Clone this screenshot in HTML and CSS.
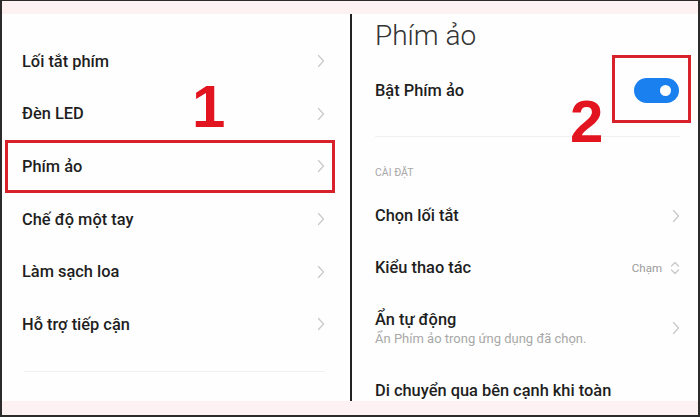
FILE: index.html
```html
<!DOCTYPE html>
<html lang="vi">
<head>
<meta charset="utf-8">
<link rel="stylesheet" href="styles.css">
</head>
<body>
<div class="frame">
  <div class="strip top"></div>
  <div class="main">
    <section class="col left">
      <div class="list">
        <div class="item"><span>Lối tắt phím</span><svg class="chev" viewBox="0 0 8 14"><path d="M1.5 1.5 L6.5 7 L1.5 12.5"/></svg></div>
        <div class="item"><span>Đèn LED</span><svg class="chev" viewBox="0 0 8 14"><path d="M1.5 1.5 L6.5 7 L1.5 12.5"/></svg></div>
        <div class="item"><span>Phím ảo</span><svg class="chev" viewBox="0 0 8 14"><path d="M1.5 1.5 L6.5 7 L1.5 12.5"/></svg></div>
        <div class="item"><span>Chế độ một tay</span><svg class="chev" viewBox="0 0 8 14"><path d="M1.5 1.5 L6.5 7 L1.5 12.5"/></svg></div>
        <div class="item"><span>Làm sạch loa</span><svg class="chev" viewBox="0 0 8 14"><path d="M1.5 1.5 L6.5 7 L1.5 12.5"/></svg></div>
        <div class="item"><span>Hỗ trợ tiếp cận</span><svg class="chev" viewBox="0 0 8 14"><path d="M1.5 1.5 L6.5 7 L1.5 12.5"/></svg></div>
      </div>
      <div class="sep-left"></div>
      <div class="mark box1"></div>
      <div class="num num1">1</div>
    </section>
    <div class="divider"></div>
    <section class="col right">
      <h1 class="title">Phím ảo</h1>
      <div class="row toggle-row">
        <span>Bật Phím ảo</span>
        <div class="toggle"><div class="knob"></div></div>
      </div>
      <div class="sep-right"></div>
      <div class="section-label">CÀI ĐẶT</div>
      <div class="row r1"><span>Chọn lối tắt</span><svg class="chev" viewBox="0 0 8 14"><path d="M1.5 1.5 L6.5 7 L1.5 12.5"/></svg></div>
      <div class="row r2"><span>Kiểu thao tác</span>
        <div class="value"><span class="val">Chạm</span><svg class="updown" viewBox="0 0 10 16"><path d="M1.5 6 L5 2.5 L8.5 6 M1.5 10 L5 13.5 L8.5 10"/></svg></div>
      </div>
      <div class="row r3">
        <div class="two"><span>Ẩn tự động</span><span class="sub">Ẩn Phím ảo trong ứng dụng đã chọn.</span></div>
        <svg class="chev" viewBox="0 0 8 14"><path d="M1.5 1.5 L6.5 7 L1.5 12.5"/></svg>
      </div>
      <div class="row r4"><span>Di chuyển qua bên cạnh khi toàn</span></div>
      <div class="mark box2"></div>
      <div class="num num2">2</div>
    </section>
  </div>
  <div class="strip bottom"></div>
</div>
</body>
</html>
```

FILE: styles.css
```css
* { box-sizing: border-box; }
html, body { margin: 0; padding: 0; background: #fff; }
body { font-family: Roboto, "Noto Sans", sans-serif; color: #1f1f1f; }

.frame {
  width: 700px;
  height: 417px;
  border-style: solid;
  border-color: #2b2b2b;
  border-width: 1px 2px 2px 2px;
  display: flex;
  flex-direction: column;
  overflow: hidden;
  background: #fefefe;
}
.strip { background: #fdf1f1; flex: none; }
.strip.top { height: 13px; }
.strip.bottom { height: 14px; }

.main {
  flex: 1;
  display: flex;
  min-height: 0;
  overflow: hidden;
}
.col { position: relative; }
.left { width: 348px; flex: none; padding: 21px 25px 0 18px; }
.divider { width: 2px; background: #222; flex: none; }
.right { flex: 1; padding: 0 18px 0 23px; display: flex; flex-direction: column; overflow: hidden; }
.right > * { flex: none; }

.list { display: flex; flex-direction: column; }
.item {
  height: 52.6px;
  display: flex;
  align-items: center;
  justify-content: space-between;
  font-size: 16.4px;
  font-weight: 500;
  padding-left: 2px;
}
.chev { width: 8px; height: 14px; flex: none; }
.chev path, .updown path { fill: none; stroke: #c8c8c8; stroke-width: 1.2; stroke-linecap: round; stroke-linejoin: round; }

.sep-left { margin: 20px 0 0 4px; height: 1px; background: #f0f0f0; }

.mark { position: absolute; border: 3px solid #d7212b; }
.box1 { left: 3px; top: 126px; width: 330px; height: 53px; }
.box2 { left: 260px; top: 41px; width: 79px; height: 68px; }

.num {
  position: absolute;
  color: #e1141f;
  font-family: "Liberation Sans", Arial, sans-serif;
  font-weight: 700;
  font-size: 60px;
  line-height: 1;
}
.num1 { left: 190px; top: 63px; }
.num2 { left: 218px; top: 78px; }

.title {
  margin: 0;
  height: 48px;
  display: flex;
  align-items: center;
  padding-bottom: 6px;
  font-size: 28px;
  font-weight: 300;
  color: #333;
}
.row {
  display: flex;
  align-items: center;
  justify-content: space-between;
  font-size: 16.4px;
  font-weight: 500;
}
.toggle-row { height: 56px; padding-right: 1px; }
.toggle {
  width: 45px;
  height: 25px;
  border-radius: 13px;
  background: #1a80ef;
  position: relative;
}
.knob {
  position: absolute;
  right: 8px;
  top: 7px;
  width: 11px;
  height: 11px;
  border-radius: 50%;
  background: #fff;
}
.sep-right { margin-top: 18px; height: 1px; background: #f0f0f0; }
.section-label {
  height: 51px;
  display: flex;
  align-items: center;
  font-size: 10.5px;
  color: #a8a8a8;
  padding-top: 20px;
}
.r1 { height: 53px; padding-top: 2px; }
.r2 { height: 53px; }
.value { display: flex; align-items: center; gap: 8px; }
.val { font-size: 11.5px; font-weight: 400; color: #9a9a9a; }
.updown { width: 10px; height: 16px; }
.r3 { height: 68px; }
.two { display: flex; flex-direction: column; }
.sub { font-size: 13px; font-weight: 400; color: #a8a8a8; margin-top: 2px; }
.r4 { height: 56px; }
```
